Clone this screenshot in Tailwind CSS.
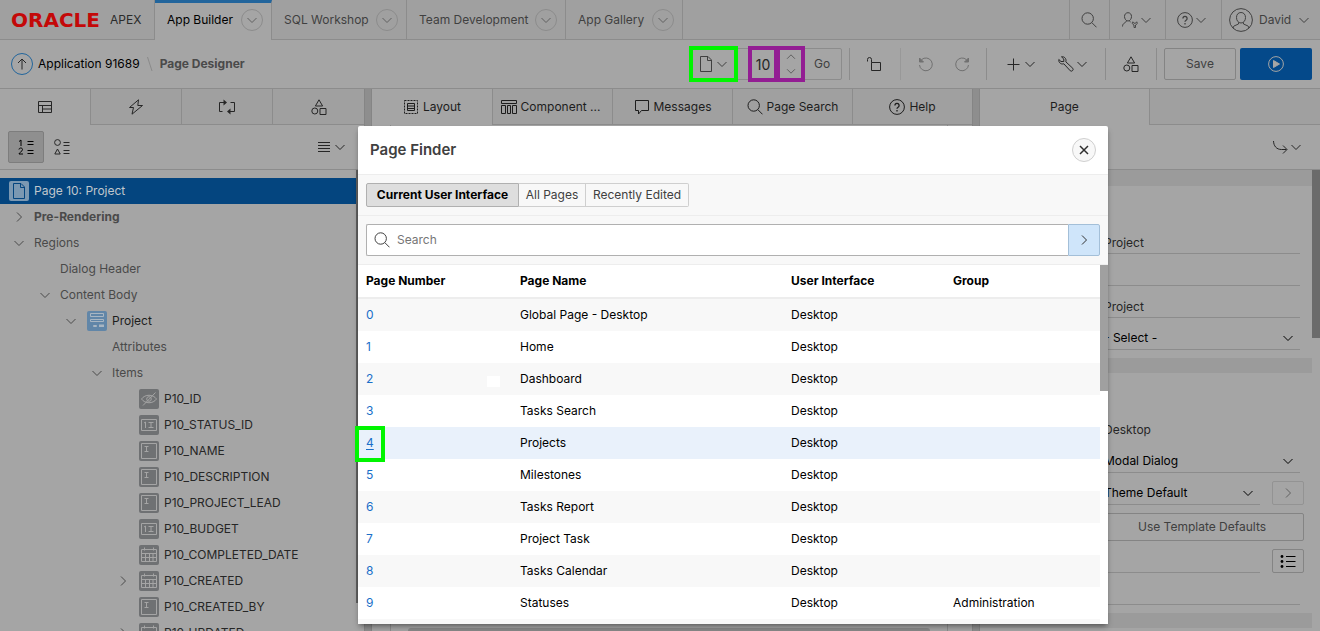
<!DOCTYPE html>
<html lang="en">
<head>
<meta charset="utf-8">
<title>Page Designer</title>
<script src="https://cdn.jsdelivr.net/npm/@tailwindcss/browser@4"></script>
</head>
<body class="relative flex h-screen flex-col overflow-hidden bg-[#a5a5a5] font-['Inter','Liberation_Sans',sans-serif] text-xs text-[#262626]">

<svg class="hidden" fill="none" stroke="currentColor">
  <symbol id="chev" viewBox="0 0 16 16"><path d="M3.500 6 8 10.500 12.500 6"/></symbol>
  <symbol id="chev-r" viewBox="0 0 16 16"><path d="M6 3.500 10.500 8 6 12.500"/></symbol>
  <symbol id="search" viewBox="0 0 16 16"><circle cx="6.700" cy="6.500" r="5.700"/><path d="m10.800 10.600 4.700 4.700"/></symbol>
  <symbol id="shapes" viewBox="0 0 16 16"><path d="M8 .8 11.600 7H4.400z"/><circle cx="3.800" cy="12" r="3"/><path d="M9 9.500h6v6H9z"/></symbol>
  <symbol id="help" viewBox="0 0 16 16"><circle cx="8" cy="8" r="7.400"/><path d="M5.900 6.400a2.100 2.100 0 1 1 3.200 1.800c-.8.500-1.100.9-1.100 1.600M8 11.100v1.300" stroke-width="1.300"/></symbol>
  <symbol id="page" viewBox="0 0 16 16"><path d="M2.500.5h7.500l3.500 3.500v11.500h-11zM9.500.5v4h4"/></symbol>
  <symbol id="num" viewBox="0 0 20 20"><path d="M2.500 4.500h15v11h-15zM5 8l1.500-1v6M9.500 7.500h5M9.500 12.500h5M12 7.500v5"/></symbol>
  <symbol id="txt" viewBox="0 0 20 20"><path d="M2.500 2.500h15v15h-15zM5.500 5.500h4M5.500 10.500h4M7.500 5.500v5"/></symbol>
  <symbol id="cal" viewBox="0 0 20 20"><path d="M2.500 4.500h15v12h-15zM2.500 8.500h15M2.500 12.500h15M6.500 8.500v8M10.500 8.500v8M14 8.500v8M5.500 2.500v3M14.500 2.500v3"/></symbol>
</svg>

<!-- Global navigation -->
<header class="flex h-10 shrink-0 bg-[#a0a0a0] text-[#404040]">
  <a href="#" class="flex w-[155px] items-center border-r border-b border-[#8c8c8c] pl-[11px]">
    <span class="w-[99px] font-['DejaVu_Sans',sans-serif] text-xl leading-5 font-bold text-[#c40808]">ORACLE</span>
    <span class="text-[#2b2b2b]">APEX</span>
  </a>
  <nav class="flex">
    <div class="flex w-[117px] items-center justify-between border-t-3 border-r border-t-[#22659c] border-r-[#8c8c8c] bg-[#a5a5a5] pr-2 pb-[3px] pl-3">
      <a href="#" class="text-black">App Builder</a>
      <button aria-label="App Builder menu" class="grid size-[22px] place-items-center rounded-full border border-[#8c8c8c] text-[#606060]"><svg class="size-4" fill="none" stroke="currentColor"><use href="#chev"/></svg></button>
    </div>
    <div class="flex w-[135px] items-center justify-between border-r border-b border-[#8c8c8c] pr-2 pl-3">
      <a href="#">SQL Workshop</a>
      <button aria-label="SQL Workshop menu" class="grid size-[22px] place-items-center rounded-full border border-[#8c8c8c] text-[#606060]"><svg class="size-4" fill="none" stroke="currentColor"><use href="#chev"/></svg></button>
    </div>
    <div class="flex w-[159px] items-center justify-between border-r border-b border-[#8c8c8c] pr-2 pl-3">
      <a href="#">Team Development</a>
      <button aria-label="Team Development menu" class="grid size-[22px] place-items-center rounded-full border border-[#8c8c8c] text-[#606060]"><svg class="size-4" fill="none" stroke="currentColor"><use href="#chev"/></svg></button>
    </div>
    <div class="flex w-[117px] items-center justify-between border-r border-b border-[#8c8c8c] pr-2 pl-3">
      <a href="#">App Gallery</a>
      <button aria-label="App Gallery menu" class="grid size-[22px] place-items-center rounded-full border border-[#8c8c8c] text-[#606060]"><svg class="size-4" fill="none" stroke="currentColor"><use href="#chev"/></svg></button>
    </div>
  </nav>
  <div class="flex flex-1 justify-end border-b border-[#8c8c8c]">
    <button aria-label="Search" class="grid w-10 place-items-center border-l border-[#8c8c8c] pr-0.5"><svg class="size-4" fill="none" stroke="currentColor"><use href="#search"/></svg></button>
    <button aria-label="Administration" class="flex w-14 items-center justify-center border-l border-[#8c8c8c]">
      <svg class="size-4" viewBox="0 0 16 16" fill="none" stroke="currentColor"><path d="M6 .7c2 0 3.500 1.500 3.500 3.800S8 9 6 9 2.500 6.800 2.500 4.500 4 .7 6 .7zM4.500 8.500c0 2.500-4 2-4 6M7.500 8.500c0 .8.500 1.300 1 1.500"/><path d="M10.800 9.800c-1.200 1.500-.3 2.700 1.200 3.200v2.500h1.500V13c1.500-.5 2.400-1.700 1.200-3.200l-1 1.400h-1.900z" stroke-width=".9"/></svg>
      <svg class="size-4" fill="none" stroke="currentColor"><use href="#chev"/></svg>
    </button>
    <button aria-label="Help" class="flex w-14 items-center justify-center border-l border-[#8c8c8c] pr-0.5">
      <svg class="size-4" fill="none" stroke="currentColor"><use href="#help"/></svg>
      <svg class="size-4" fill="none" stroke="currentColor"><use href="#chev"/></svg>
    </button>
    <button class="flex w-[99px] items-center border-l border-[#8c8c8c] pl-[7px]">
      <svg class="size-6" viewBox="0 0 24 24" fill="none" stroke="currentColor"><circle cx="12" cy="12" r="11.400"/><path d="M12 4.500c2.800 0 4.500 2 4.500 5s-1.700 5.500-4.500 5.500-4.500-2.500-4.500-5.500 1.700-5 4.500-5zM9.500 14.500v1.500l-4.500 2c-.6.300-.8 1-.8 2M14.500 14.500v1.500l4.500 2c.6.300.8 1 .8 2"/></svg>
      <span class="ml-1.5">David</span>
      <svg class="ml-[5px] size-4" fill="none" stroke="currentColor"><use href="#chev"/></svg>
    </button>
  </div>
</header>

<!-- Application toolbar -->
<div class="flex h-[49px] shrink-0 items-center border-b border-[#8c8c8c] pr-2 pl-[11px]">
  <button aria-label="Up" class="grid size-[22px] place-items-center rounded-full border border-[#22659c]"><svg class="size-3" viewBox="0 0 12 12" fill="none" stroke="currentColor"><path d="M6 11.500V1M2 5l4-4 4 4"/></svg></button>
  <a href="#" class="ml-[5px] text-black">Application 91689</a>
  <svg class="mx-[7px] h-4 w-[6px]" viewBox="0 0 6 16" fill="none" stroke="#8a8a8a"><path d="M.5 1 5 15"/></svg>
  <span class="font-bold text-[#4a4a4a]">Page Designer</span>

  <div class="ml-auto flex h-8 w-[150px] items-center rounded-xs border border-[#8c8c8c]">
    <button aria-label="Page finder" class="relative -ml-px flex h-full w-11 items-center justify-center text-[#404040]">
      <svg class="size-4" fill="none" stroke="currentColor"><use href="#page"/></svg>
      <svg class="size-4" fill="none" stroke="currentColor"><use href="#chev"/></svg>
      <span class="absolute -top-[3px] -left-[3px] h-9 w-[49px] border-4 border-[#00f500]"></span>
    </button>
    <input aria-label="Page number" value="10" class="ml-3 h-9 w-[30px] shrink-0 border-4 border-[#931d93] text-center text-sm text-[#262626]">
    <button aria-label="Previous or next page" class="-ml-0.5 flex h-9 w-[29px] shrink-0 flex-col items-center justify-center border-4 border-[#931d93] text-[#555]">
      <svg class="size-3.5 rotate-180" fill="none" stroke="currentColor"><use href="#chev"/></svg>
      <svg class="size-3.5" fill="none" stroke="currentColor"><use href="#chev"/></svg>
    </button>
    <button class="flex-1 pr-0.5 text-[#404040]">Go</button>
  </div>
  <span class="ml-[7px] h-8 w-px bg-[#8c8c8c]"></span>
  <button aria-label="Unlocked" class="grid h-8 w-[50px] place-items-center"><svg class="size-4" viewBox="0 0 16 16" fill="none" stroke="currentColor"><path d="M4.500 6.500h9v8h-9zM4.500 6.500V3.500a2 2 0 0 0-4 0V5.500"/></svg></button>
  <span class="h-8 w-px bg-[#989898]"></span>
  <div class="flex w-[85px] justify-center text-[#707070]">
    <button aria-label="Undo" class="grid h-8 w-9 place-items-center"><svg class="size-4" viewBox="0 0 16 16" fill="none" stroke="currentColor"><path d="M1.500 9a6.400 6.400 0 1 0 2-5.300"/><path d="M1.500 2v4h4z" fill="currentColor"/></svg></button>
    <button aria-label="Redo" class="grid h-8 w-9 place-items-center"><svg class="size-4" viewBox="0 0 16 16" fill="none" stroke="currentColor"><path d="M14.500 9a6.400 6.400 0 1 1-2-5.300"/><path d="M14.500 2v4h-4z" fill="currentColor"/></svg></button>
  </div>
  <span class="h-8 w-px bg-[#8c8c8c]"></span>
  <div class="flex w-[118px] items-center gap-5 pl-[19px]">
    <button aria-label="Create" class="flex h-8 items-center gap-0.5">
      <svg class="size-3.5" viewBox="0 0 14 14" fill="none" stroke="currentColor"><path d="M7.500 1.500v12M1.500 7.500h12"/></svg>
      <svg class="size-4" fill="none" stroke="currentColor"><use href="#chev"/></svg>
    </button>
    <button aria-label="Utilities" class="flex h-8 items-center">
      <svg class="size-4" viewBox="0 0 16 16" fill="none" stroke="currentColor"><path d="M3.500.800 5.800 3v2.500H3L.8 3.500C.3 6 2.500 8.700 5.800 7.800l6.500 7a1.800 1.800 0 0 0 2.500-2.500l-7-6.500C8.800 2.500 6 .2 3.500.8z"/></svg>
      <svg class="size-4" fill="none" stroke="currentColor"><use href="#chev"/></svg>
    </button>
  </div>
  <span class="h-8 w-px bg-[#8c8c8c]"></span>
  <button aria-label="Shared components" class="grid h-8 w-[50px] place-items-center"><svg class="size-4" fill="none" stroke="currentColor"><use href="#shapes"/></svg></button>
  <span class="h-8 w-px bg-[#8c8c8c]"></span>
  <button class="ml-[7px] h-8 w-[72px] rounded-xs border border-[#848484] text-[#404040]">Save</button>
  <button aria-label="Save and run page" class="ml-1 grid h-8 w-[72px] place-items-center rounded-xs bg-[#04498a] text-[#a5a5a5]"><svg class="size-4" viewBox="0 0 16 16" fill="none" stroke="currentColor"><circle cx="8" cy="8" r="7.400"/><path d="M5.500 4.500v7l6-3.500z" fill="currentColor"/></svg></button>
</div>

<main class="flex min-h-0 flex-1">
  <!-- Tree pane -->
  <section class="flex w-[364px] shrink-0 flex-col">
    <div class="flex h-9 shrink-0">
      <button aria-label="Rendering" class="grid w-[90px] place-items-center"><svg class="size-4" viewBox="0 0 16 16" fill="none" stroke="currentColor"><path d="M1.500 2.500h13v11h-13zM1.500 6.500h13M5.500 6.500v7M5.500 10h9"/></svg></button>
      <button aria-label="Dynamic actions" class="grid w-[91px] place-items-center border-b border-l border-[#8c8c8c] bg-[#a0a0a0]"><svg class="size-4" viewBox="0 0 16 16" fill="none" stroke="currentColor"><path d="M10.500.800 1.500 8.500h4L4 15.200 14.500 6.500H9.800z"/></svg></button>
      <button aria-label="Processing" class="grid w-[91px] place-items-center border-b border-l border-[#8c8c8c] bg-[#a0a0a0]"><svg class="h-4 w-[18px]" viewBox="0 0 18 16" fill="none" stroke="currentColor"><path d="M4.500 12.500h-3v-9H6M12.500 3.500h4v9H12"/><path d="M5.500.5v6L9 3.500zM12.500 9.500v6L9 12.500z" fill="currentColor" stroke="none"/></svg></button>
      <button aria-label="Shared components tree" class="grid flex-1 place-items-center border-b border-l border-[#8c8c8c] bg-[#a0a0a0]"><svg class="size-4" fill="none" stroke="currentColor"><use href="#shapes"/></svg></button>
    </div>
    <div class="flex h-[45px] shrink-0 items-center border-b border-[#8c8c8c] pr-3 pl-2">
      <button aria-label="Group by processing order" class="grid h-8 w-9 place-items-center rounded-xs border border-[#7d7d7d] bg-[#8f8f8f] text-black"><svg class="size-4" viewBox="0 0 16 16" fill="none" stroke="currentColor"><path d="M1 2.500 3 1v6M1 10.500c0-2 3.500-2 3.500 0S1 13.500 1 15h4M9.500 2.500h6M9.500 5.500h6M9.500 11.500h6M9.500 14.500h6"/></svg></button>
      <button aria-label="Group by component type" class="grid h-8 w-9 place-items-center"><svg class="size-4" viewBox="0 0 16 16" fill="none" stroke="currentColor"><circle cx="3.500" cy="3.500" r="2.900"/><path d="M3.500 10 6.200 15H.8zM9.500 3.500h6M9.500 6.500h6M9.500 11.500h6M9.500 14.500h6"/></svg></button>
      <button aria-label="Tree menu" class="ml-auto flex h-8 items-center gap-0.5 pr-1">
        <svg class="size-3" viewBox="0 0 12 12" fill="none" stroke="currentColor"><path d="M0 1.500h12M0 4.500h12M0 7.500h12M0 10.500h12"/></svg>
        <svg class="size-4" fill="none" stroke="currentColor"><use href="#chev"/></svg>
      </button>
    </div>
    <div class="flex min-h-0 flex-1 overflow-hidden">
      <ul class="min-w-0 flex-1 pt-2 leading-[26px] text-[#4a4a4a]">
        <li class="flex h-[26px] items-center bg-[#04457f] pl-[9px] text-[#c0c7cd]"><span class="grid size-5 place-items-center rounded-xs bg-[#7b98b2] text-[#04457f]"><svg class="size-4" fill="none" stroke="currentColor"><use href="#page"/></svg></span><span class="ml-[5px]">Page 10: Project</span></li>
        <li class="flex h-[26px] items-center pl-[11px]"><svg class="size-4" fill="none" stroke="currentColor"><use href="#chev-r"/></svg><span class="ml-[7px] font-bold">Pre-Rendering</span></li>
        <li class="flex h-[26px] items-center pl-[11px]"><svg class="size-4" fill="none" stroke="currentColor"><use href="#chev"/></svg><span class="ml-[7px]">Regions</span></li>
        <li class="flex h-[26px] items-center pl-[60px]">Dialog Header</li>
        <li class="flex h-[26px] items-center pl-[37px]"><svg class="size-4" fill="none" stroke="currentColor"><use href="#chev"/></svg><span class="ml-[7px]">Content Body</span></li>
        <li class="flex h-[26px] items-center pl-[63px]"><svg class="size-4" fill="none" stroke="currentColor"><use href="#chev"/></svg><svg class="ml-2 size-5 rounded-xs bg-[#6186a8]" viewBox="0 0 20 20" fill="none" stroke="#a9b6c2"><path d="M3.500 2.500h13v3h-13zM3.500 8.500h13v2h-13zM6.500 14.500h3v1h-3z"/><path d="M12 13.500h5V16h-5z" fill="#a9b6c2" stroke="none"/></svg><span class="ml-[5px] text-[#1d1d1d]">Project</span></li>
        <li class="flex h-[26px] items-center pl-[112px]">Attributes</li>
        <li class="flex h-[26px] items-center pl-[89px]"><svg class="size-4" fill="none" stroke="currentColor"><use href="#chev"/></svg><span class="ml-[7px]">Items</span></li>
        <li class="flex h-[26px] items-center pl-[139px] text-[#262626]"><svg class="size-5 rounded-xs bg-[#6f7173]" viewBox="0 0 20 20" fill="none" stroke="#a5a5a5"><path d="M2.500 10c3.500-5 11.500-5 15 0-3.500 5-11.500 5-15 0zM4 16.500 16.500 3.500"/><circle cx="10" cy="10" r="2.300"/></svg><span class="ml-[5px]">P10_ID</span></li>
        <li class="flex h-[26px] items-center pl-[139px] text-[#262626]"><svg class="size-5 rounded-xs bg-[#6f7173]" fill="none" stroke="#a5a5a5"><use href="#num"/></svg><span class="ml-[5px]">P10_STATUS_ID</span></li>
        <li class="flex h-[26px] items-center pl-[139px] text-[#262626]"><svg class="size-5 rounded-xs bg-[#6f7173]" fill="none" stroke="#a5a5a5"><use href="#txt"/></svg><span class="ml-[5px]">P10_NAME</span></li>
        <li class="flex h-[26px] items-center pl-[139px] text-[#262626]"><svg class="size-5 rounded-xs bg-[#6f7173]" fill="none" stroke="#a5a5a5"><use href="#txt"/></svg><span class="ml-[5px]">P10_DESCRIPTION</span></li>
        <li class="flex h-[26px] items-center pl-[139px] text-[#262626]"><svg class="size-5 rounded-xs bg-[#6f7173]" fill="none" stroke="#a5a5a5"><use href="#txt"/></svg><span class="ml-[5px]">P10_PROJECT_LEAD</span></li>
        <li class="flex h-[26px] items-center pl-[139px] text-[#262626]"><svg class="size-5 rounded-xs bg-[#6f7173]" fill="none" stroke="#a5a5a5"><use href="#num"/></svg><span class="ml-[5px]">P10_BUDGET</span></li>
        <li class="flex h-[26px] items-center pl-[139px] text-[#262626]"><svg class="size-5 rounded-xs bg-[#6f7173]" fill="none" stroke="#a5a5a5"><use href="#cal"/></svg><span class="ml-[5px]">P10_COMPLETED_DATE</span></li>
        <li class="flex h-[26px] items-center pl-[115px] text-[#262626]"><svg class="size-4 text-[#4a4a4a]" fill="none" stroke="currentColor"><use href="#chev-r"/></svg><svg class="ml-2 size-5 rounded-xs bg-[#6f7173]" fill="none" stroke="#a5a5a5"><use href="#cal"/></svg><span class="ml-[5px]">P10_CREATED</span></li>
        <li class="flex h-[26px] items-center pl-[139px] text-[#262626]"><svg class="size-5 rounded-xs bg-[#6f7173]" fill="none" stroke="#a5a5a5"><use href="#txt"/></svg><span class="ml-[5px]">P10_CREATED_BY</span></li>
        <li class="flex h-[26px] items-center pl-[115px] text-[#262626]"><svg class="size-4 text-[#4a4a4a]" fill="none" stroke="currentColor"><use href="#chev-r"/></svg><svg class="ml-2 size-5 rounded-xs bg-[#6f7173]" fill="none" stroke="#a5a5a5"><use href="#cal"/></svg><span class="ml-[5px]">P10_UPDATED</span></li>
      </ul>
      <div class="h-[433px] w-2 bg-[#606060]"></div>
    </div>
  </section>

  <div class="w-2 shrink-0 border-x border-[#858585] bg-[#8e8e8e]"></div>

  <!-- Layout pane -->
  <section class="flex min-w-0 flex-1 flex-col">
    <div class="grid h-9 shrink-0 grid-cols-5 text-[#1d1d1d]">
      <button class="flex items-center justify-center gap-1"><svg class="size-4" viewBox="0 0 16 16" fill="none" stroke="currentColor"><path d="M1.500 1.500h13v13h-13z" stroke-dasharray="2 1"/><path d="M4.500 4.500h7v7h-7zM4.500 7h7M4.500 9.500h7"/></svg>Layout</button>
      <button class="flex items-center justify-center gap-1 border-b border-l border-[#8c8c8c] bg-[#a0a0a0] pr-1"><svg class="size-4" viewBox="0 0 16 16" fill="none" stroke="currentColor"><path d="M.5 1.500h15v3H.5zM.5 6.500h4v8h-4zM6.500 6.500h3v8h-3zM11.500 6.500h4v8h-4z"/></svg>Component ...</button>
      <button class="flex items-center justify-center gap-1 border-b border-l border-[#8c8c8c] bg-[#a0a0a0]"><svg class="size-4" viewBox="0 0 16 16" fill="none" stroke="currentColor"><path d="M1.500 1.500h13v10H7.500L4.500 15v-3.500h-3z"/></svg>Messages</button>
      <button class="flex items-center justify-center gap-1 border-b border-l border-[#8c8c8c] bg-[#a0a0a0]"><svg class="size-4" fill="none" stroke="currentColor"><use href="#search"/></svg>Page Search</button>
      <button class="flex items-center justify-center gap-1 border-b border-l border-[#8c8c8c] bg-[#a0a0a0]"><svg class="size-4" fill="none" stroke="currentColor"><use href="#help"/></svg>Help</button>
    </div>
    <div class="mr-6 ml-[18px] flex flex-1 items-end border-x border-[#8c8c8c] px-[17px]">
      <div class="h-[3px] flex-1 rounded-t-sm bg-[#898989]"></div>
    </div>
  </section>

  <div class="w-2 shrink-0 border-x border-[#858585] bg-[#8e8e8e]"></div>

  <!-- Property editor -->
  <section class="flex w-[340px] shrink-0 flex-col">
    <div class="flex h-9 shrink-0">
      <button class="w-[169px] text-[#1d1d1d]">Page</button>
      <div class="flex-1 border-b border-l border-[#8c8c8c] bg-[#a0a0a0]"></div>
    </div>
    <div class="flex h-[45px] shrink-0 items-center justify-end border-b border-[#8c8c8c] pr-4">
      <button aria-label="Go to group" class="flex h-8 items-center"><svg class="size-4" viewBox="0 0 16 16" fill="none" stroke="currentColor"><path d="M1.500 2c.2 5 3 8.500 8 8.500h5M11 6.500l4 4-4 4"/></svg><svg class="size-4" fill="none" stroke="currentColor"><use href="#chev"/></svg></button>
    </div>
    <div class="flex min-h-0 flex-1 overflow-hidden">
      <div class="flex min-w-0 flex-1 flex-col text-black">
        <div class="h-4 shrink-0 bg-[#9b9b9b]"></div>
        <div class="mt-9 mr-3 flex h-8 shrink-0 items-center border-b border-[#8c8c8c] pt-2.5 pl-[124px] text-[#262626]">Project</div>
        <div class="mr-3 h-8 shrink-0 border-b border-[#8c8c8c]"></div>
        <div class="mr-3 flex h-8 shrink-0 items-center border-b border-[#8c8c8c] pt-2.5 pl-[124px] text-[#262626]">Project</div>
        <div class="mr-3 flex h-8 shrink-0 items-center border-b border-[#8c8c8c] pt-2 pr-1 pl-[124px]"><select aria-label="Group" class="min-w-0 flex-1 appearance-none"><option>- Select -</option></select><svg class="size-4" fill="none" stroke="currentColor"><use href="#chev"/></svg></div>
        <div class="mt-2 h-[15px] shrink-0 bg-[#9b9b9b]"></div>
        <div class="mt-[49px] flex h-4 shrink-0 items-center pl-[124px] text-[#262626]">Desktop</div>
        <div class="mt-[3px] mr-3 flex h-8 shrink-0 items-center border-b border-[#8c8c8c] pt-2 pr-1 pl-[124px]"><select aria-label="Page mode" class="min-w-0 flex-1 appearance-none"><option>Modal Dialog</option></select><svg class="size-4" fill="none" stroke="currentColor"><use href="#chev"/></svg></div>
        <div class="mr-2 flex h-8 shrink-0 items-end gap-3"><div class="flex h-8 flex-1 items-center border-b border-[#8c8c8c] pt-2 pr-1 pl-[124px]"><select aria-label="Dialog template" class="min-w-0 flex-1 appearance-none"><option>Theme Default</option></select><svg class="size-4" fill="none" stroke="currentColor"><use href="#chev"/></svg></div><button aria-label="Open template" class="grid h-6 w-8 place-items-center rounded-xs border border-[#939393] text-[#606060]"><svg class="size-4" fill="none" stroke="currentColor"><use href="#chev-r"/></svg></button></div>
        <button class="mt-2 mr-2 ml-[120px] h-7 shrink-0 rounded-xs border border-[#848484] text-[#404040]">Use Template Defaults</button>
        <div class="mr-2 flex h-8 shrink-0 items-end gap-3"><div class="flex-1 self-stretch border-b border-[#8c8c8c]"></div><button aria-label="Pick classes" class="grid h-6 w-8 place-items-center rounded-xs border border-[#848484]"><svg class="size-4" viewBox="0 0 16 16" fill="none" stroke="currentColor"><path d="M6 3.500h9.500M6 8.500h9.500M6 13.500h9.500"/><g fill="currentColor" stroke="none"><circle cx="2" cy="3.500" r="1.400"/><circle cx="2" cy="8.500" r="1.400"/><circle cx="2" cy="13.500" r="1.400"/></g></svg></button></div>
        <div class="mr-3 h-8 shrink-0 border-b border-[#8c8c8c]"></div>
        <div class="mt-2 h-[15px] shrink-0 bg-[#9b9b9b]"></div>
      </div>
      <div class="h-[168px] w-2 bg-[#6b6b6b]"></div>
    </div>
  </section>
</main>

<!-- Page Finder dialog -->
<div role="dialog" aria-labelledby="finder-title" class="absolute top-[126px] right-[212px] bottom-[7px] left-[358px] shadow-md shadow-black/30">
  <div class="flex h-full flex-col overflow-hidden rounded-t-xs bg-white text-black">
    <div class="flex h-[49px] shrink-0 items-center justify-between border-b border-[#ededed] px-3">
      <h1 id="finder-title" class="text-[15px] leading-6 font-semibold text-[#404040]">Page Finder</h1>
      <button aria-label="Close" class="grid size-6 place-items-center rounded-full border border-[#cfcfcf] bg-[#f8f8f8] text-[#303030]"><svg class="size-2.5" viewBox="0 0 10 10" fill="none" stroke="currentColor" stroke-width="1.500"><path d="m1 1 8 8M9 1 1 9"/></svg></button>
    </div>
    <div class="flex h-[41px] shrink-0 items-center border-b border-[#ededed] bg-[#f8f8f8] px-2 text-[#404040]">
      <button aria-pressed="true" class="h-6 w-[153px] rounded-l-xs border border-[#b0b0b0] bg-[#dedede] font-bold whitespace-nowrap text-black">Current User Interface</button>
      <button class="h-6 w-[67px] border-y border-r border-[#cfcfcf] whitespace-nowrap">All Pages</button>
      <button class="h-6 w-[103px] rounded-r-xs border-y border-r border-[#cfcfcf] whitespace-nowrap">Recently Edited</button>
    </div>
    <div class="flex h-[49px] shrink-0 items-center border-b border-[#ededed] bg-[#f8f8f8] px-2">
      <label class="flex h-8 flex-1 items-center rounded-l-xs border border-r-0 border-[#b0b0b0] bg-white pl-[7px] text-[#404040]">
        <svg class="size-4" fill="none" stroke="currentColor"><use href="#search"/></svg>
        <input type="text" aria-label="Search pages" placeholder="Search" class="ml-[7px] flex-1 outline-none placeholder:text-[#767676]">
      </label>
      <button aria-label="Go" class="grid h-8 w-8 place-items-center rounded-r-xs border border-[#a3bfd8] bg-[#cfe5fa] text-[#303030]"><svg class="size-4" fill="none" stroke="currentColor"><use href="#chev-r"/></svg></button>
    </div>
    <div class="flex min-h-0 flex-1 items-start">
      <table class="flex-1 table-fixed border-separate border-spacing-0 text-left">
        <colgroup><col class="w-[154px]"><col class="w-[271px]"><col class="w-[162px]"><col></colgroup>
        <thead><tr class="h-[34px]"><th class="border-b-2 border-[#ededed] px-2 font-bold">Page Number</th><th class="border-b-2 border-[#ededed] px-2 font-bold">Page Name</th><th class="border-b-2 border-[#ededed] px-2 font-bold">User Interface</th><th class="border-b-2 border-[#ededed] px-2 font-bold">Group</th></tr></thead>
        <tbody>
          <tr class="h-8 bg-[#f8f8f8]"><td class="px-2"><a href="#" class="text-[#1a6fc9]">0</a></td><td class="px-2">Global Page - Desktop</td><td class="px-2">Desktop</td><td></td></tr>
          <tr class="h-8"><td class="px-2"><a href="#" class="text-[#1a6fc9]">1</a></td><td class="px-2">Home</td><td class="px-2">Desktop</td><td></td></tr>
          <tr class="h-8 bg-[#f8f8f8]"><td class="px-2"><div class="flex items-center justify-between pr-1"><a href="#" class="text-[#1a6fc9]">2</a><span class="mt-1 h-[11px] w-[13px] bg-white"></span></div></td><td class="px-2">Dashboard</td><td class="px-2">Desktop</td><td></td></tr>
          <tr class="h-8"><td class="px-2"><a href="#" class="text-[#1a6fc9]">3</a></td><td class="px-2">Tasks Search</td><td class="px-2">Desktop</td><td></td></tr>
          <tr class="h-8 bg-[#e9f1fb]"><td class="px-2"><a href="#" class="text-[#1a6fc9] underline underline-offset-2">4</a></td><td class="px-2">Projects</td><td class="px-2">Desktop</td><td></td></tr>
          <tr class="h-8"><td class="px-2"><a href="#" class="text-[#1a6fc9]">5</a></td><td class="px-2">Milestones</td><td class="px-2">Desktop</td><td></td></tr>
          <tr class="h-8 bg-[#f8f8f8]"><td class="px-2"><a href="#" class="text-[#1a6fc9]">6</a></td><td class="px-2">Tasks Report</td><td class="px-2">Desktop</td><td></td></tr>
          <tr class="h-8"><td class="px-2"><a href="#" class="text-[#1a6fc9]">7</a></td><td class="px-2">Project Task</td><td class="px-2">Desktop</td><td></td></tr>
          <tr class="h-8 bg-[#f8f8f8]"><td class="px-2"><a href="#" class="text-[#1a6fc9]">8</a></td><td class="px-2">Tasks Calendar</td><td class="px-2">Desktop</td><td></td></tr>
          <tr class="h-8"><td class="px-2"><a href="#" class="text-[#1a6fc9]">9</a></td><td class="px-2">Statuses</td><td class="px-2">Desktop</td><td class="px-2">Administration</td></tr>
          <tr class="h-8 bg-[#f8f8f8]"><td></td><td></td><td></td><td></td></tr>
        </tbody>
      </table>
      <div class="h-[126px] w-2 bg-[#a0a0a0]"></div>
    </div>
  </div>
  <span class="absolute top-[300px] -left-[3px] h-9 w-[30px] border-4 border-[#00f500]"></span>
</div>
</body>
</html>
